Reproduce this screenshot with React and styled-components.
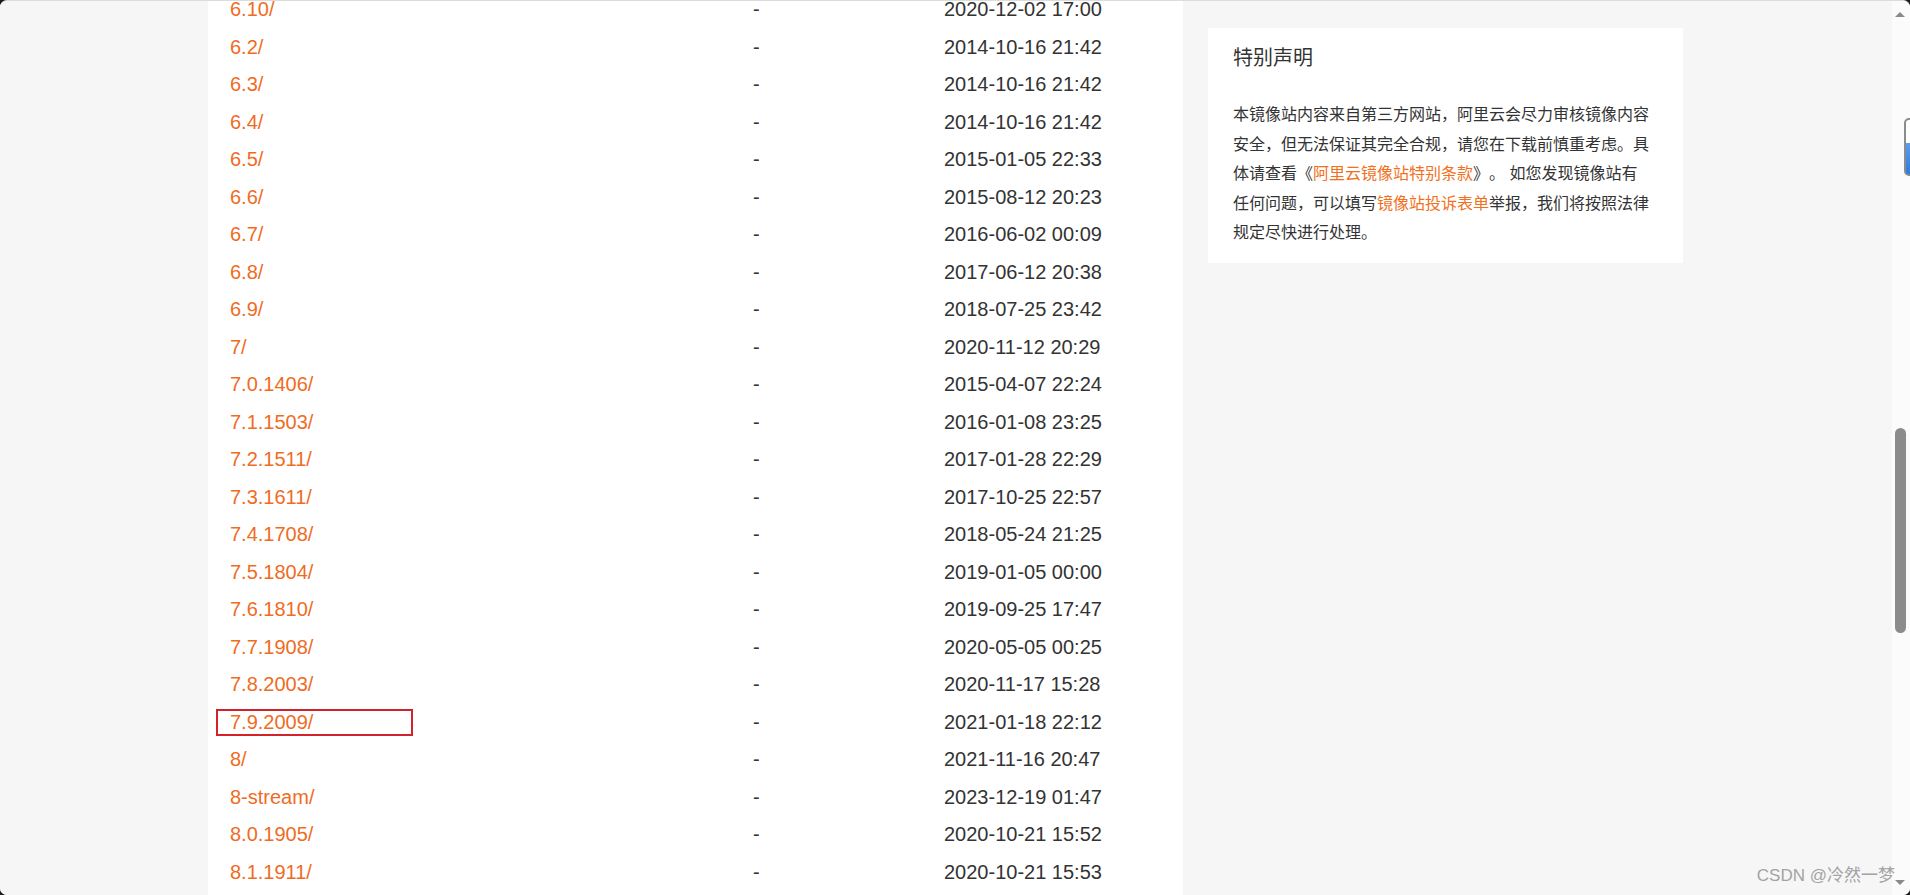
import React from "react";
import styled, { createGlobalStyle } from "styled-components";

const GlobalStyle = createGlobalStyle`
  html, body {
    margin: 0;
    padding: 0;
    background: #1c1c1c;
    overflow: hidden;
  }
  #root {
    height: 100vh;
  }
`;

const Frame = styled.div`
  position: relative;
  display: flex;
  height: 100vh;
  overflow: hidden;
  border-top: 1px solid #dcdcdc;
  border-radius: 7px;
  background: #f6f6f6;
  box-sizing: border-box;
`;

const Viewport = styled.div`
  flex: 1;
  display: flex;
  align-items: stretch;
  padding-left: 208px;
  background: #f6f6f6;
  overflow: hidden;
`;

const MainPanel = styled.main`
  width: 975px;
  flex: none;
  background: #ffffff;
  padding-left: 22px;
  box-sizing: border-box;
  overflow: hidden;
`;

const ListTable = styled.div`
  margin-top: -10px;
  font-family: "Liberation Sans", Arial, sans-serif;
  font-size: 20px;
`;

const Row = styled.div`
  position: relative;
  display: grid;
  grid-template-columns: 523px 191px 1fr;
  height: 37.5px;
  line-height: 37.5px;
  white-space: nowrap;
`;

const NameLink = styled.a`
  color: #ef6c1f;
  text-decoration: none;
`;

const SizeCell = styled.span`
  color: #333333;
`;

const DateCell = styled.span`
  color: #333333;
`;

const Highlight = styled.span`
  position: absolute;
  left: -14px;
  top: 5px;
  width: 197px;
  height: 27px;
  border: 2px solid #d2232c;
  box-sizing: border-box;
  pointer-events: none;
`;

const Aside = styled.aside`
  flex: none;
  padding: 27px 0 0 25px;
`;

const NoticeCard = styled.section`
  width: 475px;
  box-sizing: border-box;
  background: #ffffff;
  padding: 15px 32px 15px 25px;
  font-family: "Liberation Sans", "Noto Sans CJK SC", sans-serif;
  color: #333333;
`;

const NoticeTitle = styled.h3`
  margin: 0;
  font-size: 20px;
  font-weight: normal;
  line-height: 30px;
`;

const NoticeBody = styled.p`
  margin: 27px 0 0;
  font-size: 16px;
  line-height: 29.5px;
  text-spacing-trim: space-all;
  font-feature-settings: "halt" 0, "chws" 0;
`;

const NoticeLink = styled.a`
  color: #f2701c;
  text-decoration: none;
`;

const Scrollbar = styled.div`
  position: relative;
  width: 18px;
  flex: none;
  background: #fbfbfb;
`;

const Arrow = styled.span`
  position: absolute;
  left: 3px;
  width: 0;
  height: 0;
  border-left: 5.5px solid transparent;
  border-right: 5.5px solid transparent;
  ${(p) =>
    p.$dir === "up"
      ? `top: 11px; border-bottom: 5px solid #8a8a8a;`
      : `bottom: 10px; border-top: 5px solid #8a8a8a;`}
`;

const Thumb = styled.span`
  position: absolute;
  left: 3px;
  top: 427px;
  width: 11px;
  height: 205px;
  border-radius: 6px;
  background: #8b8b8b;
`;

const SideWidget = styled.span`
  position: absolute;
  right: -8px;
  top: 117px;
  width: 14px;
  height: 58px;
  border: 2px solid #8c8c8c;
  border-radius: 5px;
  box-sizing: border-box;
  background: linear-gradient(to bottom, #ffffff 0%, #ffffff 42%, #5a9ef0 42%, #2e7be0 100%);
`;

const Watermark = styled.span`
  position: absolute;
  right: 15px;
  bottom: 9px;
  font-family: "Liberation Sans", "Noto Sans CJK SC", sans-serif;
  font-size: 17px;
  color: #a3a3a3;
  white-space: nowrap;
  pointer-events: none;
`;

const rows = [
  ["6.10/", "2020-12-02 17:00"],
  ["6.2/", "2014-10-16 21:42"],
  ["6.3/", "2014-10-16 21:42"],
  ["6.4/", "2014-10-16 21:42"],
  ["6.5/", "2015-01-05 22:33"],
  ["6.6/", "2015-08-12 20:23"],
  ["6.7/", "2016-06-02 00:09"],
  ["6.8/", "2017-06-12 20:38"],
  ["6.9/", "2018-07-25 23:42"],
  ["7/", "2020-11-12 20:29"],
  ["7.0.1406/", "2015-04-07 22:24"],
  ["7.1.1503/", "2016-01-08 23:25"],
  ["7.2.1511/", "2017-01-28 22:29"],
  ["7.3.1611/", "2017-10-25 22:57"],
  ["7.4.1708/", "2018-05-24 21:25"],
  ["7.5.1804/", "2019-01-05 00:00"],
  ["7.6.1810/", "2019-09-25 17:47"],
  ["7.7.1908/", "2020-05-05 00:25"],
  ["7.8.2003/", "2020-11-17 15:28"],
  ["7.9.2009/", "2021-01-18 22:12", true],
  ["8/", "2021-11-16 20:47"],
  ["8-stream/", "2023-12-19 01:47"],
  ["8.0.1905/", "2020-10-21 15:52"],
  ["8.1.1911/", "2020-10-21 15:53"],
  ["8.2.2004/", "2021-01-18 22:12"],
];

export default function App() {
  return (
    <>
      <GlobalStyle />
      <Frame>
        <Viewport>
          <MainPanel>
            <ListTable>
              {rows.map(([name, date, marked]) => (
                <Row key={name}>
                  <NameLink href="#">{name}</NameLink>
                  <SizeCell>-</SizeCell>
                  <DateCell>{date}</DateCell>
                  {marked && <Highlight />}
                </Row>
              ))}
            </ListTable>
          </MainPanel>
          <Aside>
            <NoticeCard>
              <NoticeTitle>特别声明</NoticeTitle>
              <NoticeBody>
                本镜像站内容来自第三方网站，阿里云会尽力审核镜像内容安全，但无法保证其完全合规，请您在下载前慎重考虑。具体请查看《
                <NoticeLink href="#">阿里云镜像站特别条款</NoticeLink>》。 如您发现镜像站有任何问题，可以填写
                <NoticeLink href="#">镜像站投诉表单</NoticeLink>
                举报，我们将按照法律规定尽快进行处理。
              </NoticeBody>
            </NoticeCard>
          </Aside>
        </Viewport>
        <Scrollbar>
          <Arrow $dir="up" />
          <SideWidget />
          <Thumb />
          <Arrow $dir="down" />
        </Scrollbar>
        <Watermark>CSDN @冷然一梦</Watermark>
      </Frame>
    </>
  );
}
